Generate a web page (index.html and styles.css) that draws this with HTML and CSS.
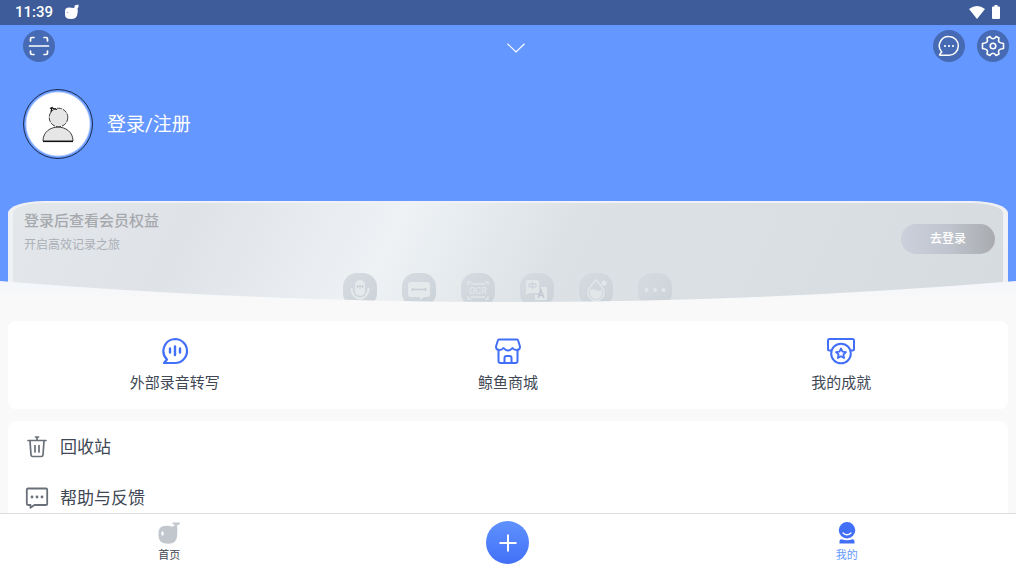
FILE: index.html
```html
<!DOCTYPE html>
<html lang="zh-CN">
<head>
<meta charset="utf-8">
<meta name="viewport" content="width=device-width, initial-scale=1">
<title>我的</title>
<link rel="stylesheet" href="styles.css">
</head>
<body>
<div class="status">
  <span class="clock">11:39</span>
  <svg class="status-app" width="16" height="16" viewBox="0 0 16 16" fill="#fff"><path d="M1 7Q1 3.500 5 3.500L10 4Q11 3 10.500 1.500L14.500.5Q15 3 13.500 4.500Q14 6 13.500 9.500Q13 15 7 15Q1 15 1 10.500Z"/><circle cx="3.500" cy="8.500" r=".8" fill="#a9b8d6"/></svg>
  <span class="spacer"></span>
  <svg width="16" height="13" viewBox="0 0 16 13" fill="#fff"><path d="M0 3Q8-3 16 3L8 13Z"/></svg>
  <svg class="battery" width="8" height="14" viewBox="0 0 8 14" fill="#fff"><path d="M2.500 0h3v1.500H7q1 0 1 1V13q0 1-1 1H1q-1 0-1-1V2.500q0-1 1-1h1.500z"/></svg>
</div>

<main class="content">
  <section class="hero">
    <div class="toolbar">
      <button class="round" aria-label="扫一扫"><svg width="22" height="20" viewBox="0 0 22 20" fill="none" stroke="#fff" stroke-width="1.700" stroke-linecap="round"><path d="M2.500 5V3q0-1.500 1.500-1.500h2M16 1.500h2q1.500 0 1.500 1.500v2M19.500 15v2q0 1.500-1.500 1.500h-2M6 18.500H4q-1.500 0-1.500-1.500v-2M1.500 10h19"/></svg></button>
      <button class="chevron" aria-label="展开"><svg width="18" height="10" viewBox="0 0 18 10" fill="none" stroke="#fff" stroke-width="1.200"><path d="M.5.800 9 9 17.500.800"/></svg></button>
      <div class="tools">
        <button class="round" aria-label="消息"><svg width="22" height="22" viewBox="0 0 22 22" fill="none" stroke="#fff" stroke-width="1.500"><path d="M11 1.500a9.300 9.300 0 1 1 0 18.700H2q-.8-.4 0-1.200l1.700-2A9.300 9.300 0 0 1 11 1.500Z"/><path d="M7 11h.01M11 11h.01M15 11h.01" stroke-width="2.200" stroke-linecap="round"/></svg></button>
        <button class="round" aria-label="设置"><svg width="24" height="22" viewBox="0 0 24 22" fill="none" stroke="#fff" stroke-width="1.600" stroke-linejoin="round"><path d="M9 1.500Q10 3.800 12 3.800T15 1.500L18 3Q17 6 18 7T22.500 8.500V13.500Q19 14 18 15T18 19L15 20.500Q14 18.200 12 18.200T9 20.500L6 19Q7 16 6 15T1.500 13.500V8.500Q5 8 6 7T6 3Z"/><circle cx="12" cy="11" r="2.800"/></svg></button>
      </div>
    </div>
    <a class="profile" href="#">
      <span class="avatar"><svg width="34" height="38" viewBox="0 0 34 38" fill="#e6e6e6" stroke="#111"><circle cx="17.500" cy="12.500" r="9.300" stroke-width=".8" stroke-dasharray="5 1"/><path d="M10 7 11 2.500 9 3.500M11 3l5 1.500" fill="none" stroke-width="1.200"/><path d="M2 36C2 17.500 32 17.500 32 36Z" stroke-width=".8"/><path d="M2 36.500h30" stroke-width="1.200"/></svg></span>
      <span class="profile-name">登录/注册</span>
    </a>
    <div class="vip">
      <div class="vip-top">
        <div>
          <h2 class="vip-title">登录后查看会员权益</h2>
          <p class="vip-sub">开启高效记录之旅</p>
        </div>
        <button class="login">去登录</button>
      </div>
      <ul class="perks">
        <li><svg width="34" height="34" viewBox="0 0 34 34"><rect x="12" y="7" width="10" height="16" rx="5" fill="#e4e9ec"/><path d="M8.500 15c0 14 17 14 17 0M17 25v5" fill="none" stroke="#e4e9ec" stroke-width="1.800"/><path d="M14.500 12v3M17 11v5M19.500 12v3M13 13.500h8" stroke="#ccd3d9"/></svg></li>
        <li><svg width="34" height="34" viewBox="0 0 34 34"><path d="M9 9h16q3 0 3 3v9q0 3-3 3h-3l-4 3v-3H9q-3 0-3-3v-9q0-3 3-3Z" fill="#e4e9ec"/><path d="M10 16.500h14M10.500 15v3M23.500 15v3" stroke="#c8d0d6" stroke-width="1.500"/></svg></li>
        <li><svg width="34" height="34" viewBox="0 0 34 34" fill="none" stroke="#e1e6e9" stroke-width="1.300"><path d="M7 12V9h3M24 9h3v3M7 23v3h3M24 26h3v-3M10 11h14M10 24h14"/><text class="ocr" x="17" y="21" text-anchor="middle">OCR</text></svg></li>
        <li><svg width="34" height="34" viewBox="0 0 34 34"><path d="M8 7h9q2 0 2 2v11H9l-3 2V9q0-2 2-2ZM21 14h6v13H15v-5h6Z" fill="#e1e6e9"/><path d="M9 11h7v3H9zM12.500 9v7" fill="none" stroke="#c8d0da"/><path d="m18 25 3-8 3 8M19 22.500h4" fill="none" stroke="#c1c8d1" stroke-width="1.400"/></svg></li>
        <li><svg width="34" height="34" viewBox="0 0 34 34"><path d="M17 7q8 8 8 12.500a8 8 0 0 1-16 0Q9 15 17 7Z" fill="none" stroke="#e1e6e9" stroke-width="1.500"/><path d="M11 17q3-2 6 0t6 0v3a6 6 0 0 1-12 0Z" fill="#e1e6e9"/><circle cx="25" cy="10" r="2.500" fill="#e1e6e9"/></svg></li>
        <li><svg width="34" height="34" viewBox="0 0 34 34" fill="#e1e6ec"><circle cx="8.500" cy="17" r="2"/><circle cx="17" cy="17" r="2"/><circle cx="25.500" cy="17" r="2"/></svg></li>
      </ul>
    </div>
    <svg class="wave" viewBox="0 0 1000 22" preserveAspectRatio="none"><defs><linearGradient id="fade" x1="0" y1="0" x2="0" y2="1"><stop offset="0" stop-color="#f4f6fa"/><stop offset="1" stop-color="#f9f9f9"/></linearGradient></defs><path d="M0 1Q500 43 1000 1V22H0Z" fill="url(#fade)"/></svg>
  </section>

  <nav class="panel shortcuts" aria-label="服务">
    <a href="#"><svg width="28" height="28" viewBox="0 0 28 28" fill="none" stroke="#416ff8" stroke-width="2.200" stroke-linecap="round" stroke-linejoin="round"><path d="M14 2a12 12 0 1 1 0 24H3l3-3.500A12 12 0 0 1 14 2Z"/><path d="M9 11.500v4M14 9.500v8.500M19 11.500v4" stroke-width="2.400"/></svg><span>外部录音转写</span></a>
    <a href="#"><svg width="28" height="28" viewBox="0 0 28 28" fill="none" stroke="#416ff8" stroke-width="2" stroke-linejoin="round"><path d="M5 2.500h18q1 0 1.300 1.500L26 9.500q0 3.500-3.500 3.500-2.500 0-4-2-2 2.500-4.500 2.500T9.500 11q-1.500 2-4 2Q2 13 2 9.500L3.700 4Q4 2.500 5 2.500ZM4.500 13v11q0 2 2 2h15q2 0 2-2V13M10.500 26v-5q0-2 2-2h3q2 0 2 2v5"/></svg><span>鲸鱼商城</span></a>
    <a href="#"><svg width="28" height="28" viewBox="0 0 28 28" fill="none" stroke="#416ff8" stroke-width="2" stroke-linejoin="round"><path d="M5 13.500H2.500Q1 13.500 1 12V3.500Q1 2 2.500 2h23Q27 2 27 3.500V12q0 1.500-1.500 1.500H23"/><circle cx="14" cy="16.500" r="9.800"/><path d="m14 11.500 1.500 3.200 3.500.4-2.600 2.400.7 3.500-3.100-1.700-3.100 1.700.7-3.500L9 15.100l3.500-.4Z" stroke-width="1.800"/></svg><span>我的成就</span></a>
  </nav>

  <nav class="panel list" aria-label="更多">
    <a href="#"><svg width="24" height="24" viewBox="0 0 24 24" fill="none" stroke="#697079" stroke-width="1.700" stroke-linecap="round" stroke-linejoin="round"><path d="M3 5.500h18M12 5V2M10.500 2h3M5 6l1 14q.2 1.500 1.700 1.500h8.600Q17.800 21.500 18 20l1-14M10 10.500v6.500M14 10.500v6.500"/></svg><span>回收站</span></a>
    <a href="#"><svg width="24" height="24" viewBox="0 0 24 24" fill="none" stroke="#697079" stroke-width="1.800" stroke-linejoin="round"><path d="M3 2.500h18q1.200 0 1.200 1.200v14Q22.200 19 21 19H9.500L5.500 21.800V19H3q-1.200 0-1.200-1.200V3.700Q1.800 2.500 3 2.500Z"/><path d="M7 11h.01M12 11h.01M17 11h.01" stroke-width="2.800" stroke-linecap="round"/></svg><span>帮助与反馈</span></a>
  </nav>
</main>

<nav class="tabs" aria-label="主导航">
  <a class="tab" href="#"><svg width="22" height="22" viewBox="0 0 22 22" fill="#c1c7cc"><path d="M.5 11Q.5 4.500 6 4Q11 3.500 14 4.500Q16.500 5 16.800 2.800L14.500 2V.5H21.800V2.200L19 3.200Q19.500 5 19.200 13Q19 21.800 10 21.800Q.5 21.800 .5 14Z"/><ellipse cx="4.500" cy="11.500" rx="1.200" ry="2.200" fill="#fff"/></svg><span>首页</span></a>
  <button class="add" aria-label="新建"><svg width="18" height="18" viewBox="0 0 18 18" stroke="#fff" stroke-width="2"><path d="M9 .5v17M.5 9h17"/></svg></button>
  <a class="tab active" href="#" aria-current="page"><svg width="22" height="22" viewBox="0 0 22 22" fill="#416ff8"><circle cx="11" cy="8.200" r="8.200"/><path d="M7 11q4 3.500 8 0" fill="none" stroke="#fff" stroke-width="1.300" stroke-linecap="round"/><path d="M5.500 17.300q5.500 1.700 11 0 2 .2 2 2v2.200h-15v-2.200q0-1.800 2-2Z"/></svg><span>我的</span></a>
</nav>
</body>
</html>
```
FILE: styles.css
```css
* { box-sizing: border-box; }
body {
  margin: 0;
  height: 100vh;
  display: flex;
  flex-direction: column;
  overflow: hidden;
  background: #f9f9f9;
  color: #414855;
  font-family: Roboto, "Noto Sans CJK SC", sans-serif;
}
a { color: inherit; text-decoration: none; }
button { border: 0; padding: 0; font: inherit; color: inherit; background: none; cursor: pointer; }
svg { display: block; flex: none; }

.status {
  flex: none;
  display: flex;
  align-items: center;
  height: 25px;
  padding: 0 16px 1px 15px;
  background: #3d5c99;
  color: #fff;
}
.clock { font-size: 15px; font-weight: 500; line-height: 20px; }
.status-app { margin-left: 11px; }
.spacer { flex: 1; }
.battery { margin-left: 7px; }

.content { flex: 1; min-height: 0; overflow: hidden; }

.hero {
  position: relative;
  height: 277px;
  overflow: hidden;
  background: #6497ff;
  color: #fff;
}
.toolbar {
  display: grid;
  grid-template-columns: 1fr auto 1fr;
  align-items: center;
  padding: 5px 7px 0 23px;
}
.round {
  display: grid;
  place-items: center;
  width: 32px;
  height: 32px;
  border-radius: 50%;
  background: #466ab3;
}
.chevron { padding: 4px 0 0; }
.tools { display: flex; justify-content: flex-end; gap: 12px; }
.profile {
  display: flex;
  align-items: center;
  gap: 14px;
  margin: 27px 23px 0;
  font-size: 19px;
  line-height: 28px;
}
.profile-name { padding-top: 2px; }
.avatar {
  display: grid;
  place-items: center;
  width: 70px;
  height: 70px;
  border: 1px solid #1c2a48;
  border-radius: 50%;
  background: radial-gradient(circle, #fff 31px, #6497ff 33px);
}
.vip {
  height: 110px;
  margin: 42px 8px 0;
  padding: 8px 8px 0 11px;
  border: solid #eff1f4;
  border-width: 2px 5px 0;
  border-radius: 36px 36px 0 0 / 12px 12px 0 0;
  background: linear-gradient(115deg, #e3e7ea 0%, #dfe2e7 18%, #eef2f5 38%, #dce1e5 55%, #d9dfe3 75%, #d6dbdf 100%);
}
.vip-top { display: flex; align-items: center; justify-content: space-between; }
.vip-title { margin: 0; font-size: 15px; font-weight: 500; line-height: 20px; color: #a6a9ad; }
.vip-sub { margin: 4px 0 0; font-size: 12px; line-height: 20px; color: #aaafb7; }
.login {
  width: 94px;
  height: 30px;
  margin-top: 11px;
  border-radius: 15px;
  background: linear-gradient(90deg, #cbd1dc, #bfc4ce 50%, #a9abae);
  color: #fff;
  font-size: 12px;
  font-weight: 500;
  line-height: 28px;
}
.perks {
  display: flex;
  justify-content: center;
  gap: 25px;
  margin: 18px 0 0;
  padding: 0 4px 0 0;
  list-style: none;
}
.perks li { border-radius: 14px; background: linear-gradient(135deg, #d5dbe1, #ccd3d8); }
.ocr { fill: #e1e6e9; stroke: none; font-size: 9px; font-weight: 500; }
.wave { position: absolute; left: 0; bottom: 0; width: 100%; height: 22px; }

.panel { margin: 0 8px; border-radius: 8px; background: #fff; }
.shortcuts {
  display: grid;
  grid-template-columns: repeat(3, 1fr);
  margin-top: 19px;
  padding: 16px 0 14px;
}
.shortcuts a {
  display: flex;
  flex-direction: column;
  align-items: center;
  gap: 6px;
  font-size: 15px;
  line-height: 24px;
}
.list { margin-top: 12px; padding: 0 17px; }
.list a {
  display: flex;
  align-items: center;
  gap: 11px;
  height: 51px;
  font-size: 17px;
  line-height: 24px;
}

.tabs {
  flex: none;
  display: grid;
  grid-template-columns: repeat(3, 1fr);
  justify-items: center;
  align-items: center;
  height: 59px;
  padding-bottom: 1px;
  border-top: 1px solid #dcdcdc;
  background: #fff;
}
.tab {
  display: flex;
  flex-direction: column;
  align-items: center;
  gap: 4px;
  font-size: 11px;
  line-height: 16px;
}
.active { color: #6497ff; }
.add {
  display: grid;
  place-items: center;
  width: 43px;
  height: 43px;
  border-radius: 50%;
  background: linear-gradient(#5f92ff, #4270f6);
}
```
